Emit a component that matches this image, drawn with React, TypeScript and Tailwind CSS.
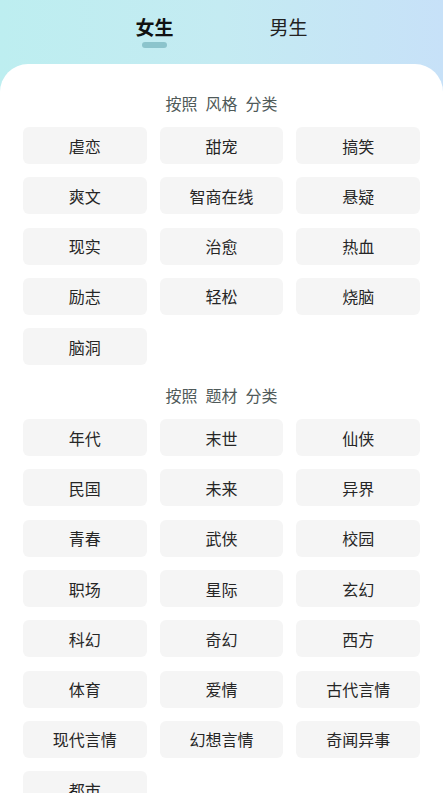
import React, { useState } from "react";

const styleTags = ["虐恋", "甜宠", "搞笑", "爽文", "智商在线", "悬疑", "现实", "治愈", "热血", "励志", "轻松", "烧脑", "脑洞"];
const themeTags = [
  "年代", "末世", "仙侠", "民国", "未来", "异界", "青春", "武侠", "校园",
  "职场", "星际", "玄幻", "科幻", "奇幻", "西方", "体育", "爱情", "古代言情",
  "现代言情", "幻想言情", "奇闻异事", "都市",
];

const font = "font-['Noto_Sans_CJK_SC','Noto_Sans',sans-serif]";

function Section({ words, tags }: { words: string[]; tags: string[] }) {
  return (
    <div>
      <div className="flex justify-center gap-[8px] text-[16px] leading-[20px] text-[#4f5a59]">
        {words.map((w) => (
          <span key={w}>{w}</span>
        ))}
      </div>
      <div className="mt-[14px] grid grid-cols-3 gap-x-[13px] gap-y-[13.3px]">
        {tags.map((tag) => (
          <div
            key={tag}
            className="flex h-[37px] items-center justify-center rounded-[6px] bg-[#f5f5f5] text-[16px] text-[#262626]"
          >
            {tag}
          </div>
        ))}
      </div>
    </div>
  );
}

export default function App() {
  const [tab, setTab] = useState(0);

  return (
    <div className={`${font} h-[793px] overflow-hidden bg-gradient-to-r from-[#bdeef0] via-[#c4ebf2] to-[#c7e1f8]`}>
      {/* Tabs */}
      <div className="flex h-[64px] justify-center gap-[96px] pt-[14px]">
        {["女生", "男生"].map((label, i) => (
          <button key={label} onClick={() => setTab(i)} className="flex flex-col items-center">
            <span
              className={`text-[19px] leading-[26px] ${
                tab === i ? "font-bold text-[#111]" : "text-[#222]"
              }`}
            >
              {label}
            </span>
            <span className={`mt-[2px] h-[6px] w-[25px] rounded-full ${tab === i ? "bg-[#8cc4cc]" : "bg-transparent"}`} />
          </button>
        ))}
      </div>

      {/* Card */}
      <div className="rounded-t-[28px] bg-white px-[23px] pt-[29px] pb-10">
        <Section words={["按照", "风格", "分类"]} tags={styleTags} />
        <div className="mt-[20px]">
          <Section words={["按照", "题材", "分类"]} tags={themeTags} />
        </div>
      </div>
    </div>
  );
}
